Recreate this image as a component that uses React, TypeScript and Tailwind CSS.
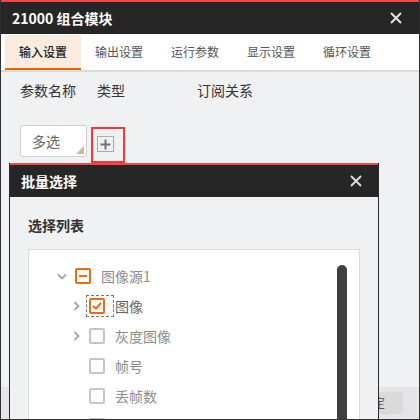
import React from "react";

const font = { fontFamily: '"Noto Sans CJK SC", "Noto Sans", sans-serif' };

const tabs = ["输入设置", "输出设置", "运行参数", "显示设置", "循环设置"];

type Row = {
  label: string;
  level: 0 | 1;
  arrow?: "down" | "right";
  state: "partial" | "checked" | "none";
  focused?: boolean;
};

const rows: Row[] = [
  { label: "图像源1", level: 0, arrow: "down", state: "partial" },
  { label: "图像", level: 1, arrow: "right", state: "checked", focused: true },
  { label: "灰度图像", level: 1, arrow: "right", state: "none" },
  { label: "帧号", level: 1, state: "none" },
  { label: "丢帧数", level: 1, state: "none" },
  { label: "", level: 1, state: "none" },
];

function CloseIcon({ className }: { className?: string }) {
  return (
    <svg width="12" height="12" viewBox="0 0 12 12" className={className}>
      <path d="M1 1 L11 11 M11 1 L1 11" stroke="currentColor" strokeWidth="2" />
    </svg>
  );
}

function Arrow({ dir }: { dir?: "down" | "right" }) {
  return (
    <span className="w-[16px] h-[16px] flex items-center justify-center text-[#a8a8a8]">
      {dir === "down" && (
        <svg width="10" height="7" viewBox="0 0 10 7">
          <path d="M1 1.5 L5 5.5 L9 1.5" fill="none" stroke="currentColor" strokeWidth="1.8" />
        </svg>
      )}
      {dir === "right" && (
        <svg width="7" height="10" viewBox="0 0 7 10">
          <path d="M1.5 1 L5.5 5 L1.5 9" fill="none" stroke="currentColor" strokeWidth="1.8" />
        </svg>
      )}
    </span>
  );
}

function Box({ state }: { state: Row["state"] }) {
  if (state === "partial")
    return (
      <span className="w-[16px] h-[16px] border-2 border-[#f26a10] rounded-[2px] bg-white flex items-center justify-center">
        <span className="w-[8px] h-[2px] bg-[#f26a10]" />
      </span>
    );
  if (state === "checked")
    return (
      <span className="w-[16px] h-[16px] border-2 border-[#f26a10] rounded-[2px] bg-white flex items-center justify-center">
        <svg width="10" height="8" viewBox="0 0 10 8">
          <path d="M1 4 L4 6.5 L9 1" fill="none" stroke="#f26a10" strokeWidth="2" />
        </svg>
      </span>
    );
  return <span className="w-[16px] h-[16px] border-2 border-[#c6c6c6] rounded-[2px] bg-white" />;
}

function TreeRow({ row }: { row: Row }) {
  return (
    <div className={`h-[30px] shrink-0 flex items-center ${row.level === 0 ? "pl-[25px]" : "pl-[39px]"}`}>
      <Arrow dir={row.arrow} />
      <div
        className={`ml-[2px] w-[28px] h-[22px] flex items-center pl-[2px] border border-dashed ${
          row.focused ? "border-[#777]" : "border-transparent"
        }`}
      >
        <Box state={row.state} />
      </div>
      <span
        className={`ml-[1px] text-[14px] leading-[20px] ${
          row.state === "checked" ? "text-[#666]" : "text-[#8c8c8c]"
        }`}
      >
        {row.label}
      </span>
    </div>
  );
}

export default function App() {
  return (
    <div
      style={font}
      className="relative w-[420px] h-[420px] overflow-hidden flex flex-col bg-[#f0f1f3] border-x border-b border-[#303030]"
    >
      <div className="h-[2px] shrink-0 bg-[#f04848]" />
      <div className="h-[32px] shrink-0 bg-[#262626] flex items-center justify-between pl-[11px] pr-[17px]">
        <span className="text-white text-[14px] font-bold">21000 组合模块</span>
        <CloseIcon className="text-[#e2e2e2]" />
      </div>

      <div className="bg-white shrink-0 pl-[4px] pt-px flex border-b-2 border-[#dadada]">
        {tabs.map((t, i) => (
          <div
            key={t}
            className={`w-[76px] h-[35px] flex items-center pl-[14px] text-[12px] ${
              i === 0
                ? "bg-[#fcebdf] border-b-2 border-[#e46a00] text-[#222] font-medium"
                : "text-[#555] border-b-2 border-transparent"
            }`}
          >
            {t}
          </div>
        ))}
      </div>

      <div className="flex-1 pl-[19px] pt-[8px]">
        <div className="flex text-[14px] leading-[20px] text-[#333]">
          <span className="w-[77px]">参数名称</span>
          <span className="w-[100px]">类型</span>
          <span>订阅关系</span>
        </div>
        <div className="flex items-start mt-[25px]">
          <div className="relative w-[67px] h-[32px] bg-white border border-[#cfcfcf] rounded-[3px] flex items-center pl-[11px] text-[14px] text-[#666]">
            多选
            <span className="absolute right-[2px] bottom-[2px] w-0 h-0 border-l-[8px] border-l-transparent border-b-[8px] border-b-[#cbb6a4]" />
          </div>
          <div className="ml-[4px] mt-[2px] w-[34px] h-[36px] border-2 border-[#ff3535] pl-[4px] pt-[7px]">
            <div className="w-[17px] h-[16px] border border-[#ababab] flex items-center justify-center">
              <svg width="11" height="11" viewBox="0 0 11 11">
                <path d="M5.5 0.5 V10.5 M0.5 5.5 H10.5" stroke="#737373" strokeWidth="2" />
              </svg>
            </div>
          </div>
        </div>
      </div>

      <div className="h-[32px] shrink-0 bg-[#e5e5e7] flex items-center justify-end pr-[16px]">
        <div className="w-[60px] h-[22px] rounded-[3px] bg-[#dadada] flex items-center justify-center text-[12px] text-[#555]">
          确定
        </div>
      </div>

      <div className="absolute left-[8px] top-[163px] w-[370px] h-[300px] flex flex-col border-x border-[#2c2c2c] bg-[#f0f1f3]">
        <div className="h-[2px] shrink-0 bg-[#f04848]" />
        <div className="h-[32px] shrink-0 bg-[#262626] flex items-center justify-between pl-[11px] pr-[16px]">
          <span className="text-white text-[14px] font-bold">批量选择</span>
          <CloseIcon className="text-[#dcdcdc]" />
        </div>
        <div className="shrink-0 px-[18px] pt-[18px]">
          <div className="text-[14px] leading-[20px] font-bold text-[#333]">选择列表</div>
          <div className="relative mt-[14px] h-[240px] bg-white border border-[#dcdcdc] pt-[11px]">
            {rows.map((r, i) => (
              <TreeRow key={i} row={r} />
            ))}
            <div className="absolute left-[308px] top-[15px] w-[10px] h-[200px] rounded-full bg-[#404040]" />
          </div>
        </div>
      </div>
    </div>
  );
}
